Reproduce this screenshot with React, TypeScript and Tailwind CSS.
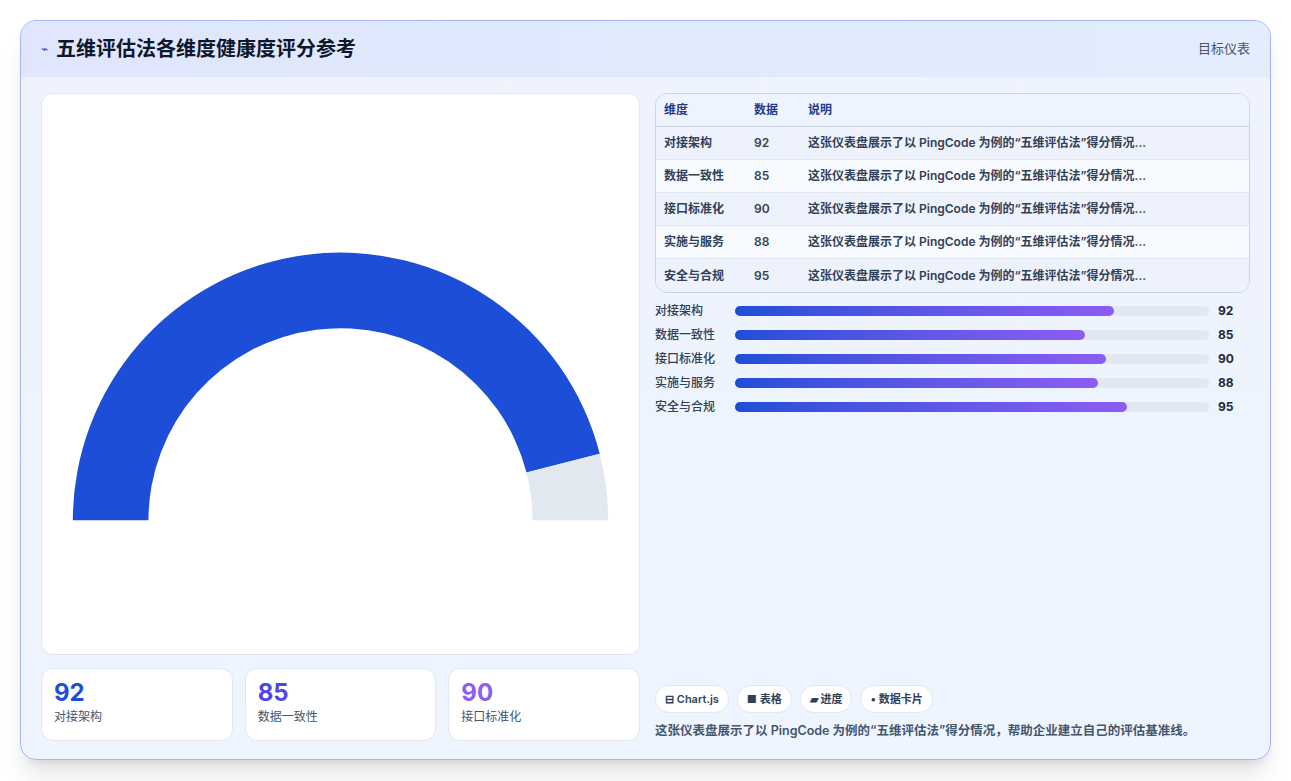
const rows = [
  { name: "对接架构", v: 92 },
  { name: "数据一致性", v: 85 },
  { name: "接口标准化", v: 90 },
  { name: "实施与服务", v: 88 },
  { name: "安全与合规", v: 95 },
];
const DESC = "这张仪表盘展示了以 PingCode 为例的“五维评估法”得分情况，帮助企业建立自己的评估基准线。";

function Gauge({ value }: { value: number }) {
  const cx = 300, cy = 300, R = 269, r = 193;
  const a = Math.PI * (1 - value / 100);
  const pt = (rad: number, ang: number) => [cx + rad * Math.cos(ang), cy - rad * Math.sin(ang)];
  const [ox, oy] = pt(R, a);
  const [ix, iy] = pt(r, a);
  const blue = `M ${cx - R} ${cy} A ${R} ${R} 0 0 1 ${ox} ${oy} L ${ix} ${iy} A ${r} ${r} 0 0 0 ${cx - r} ${cy} Z`;
  const gray = `M ${ox} ${oy} A ${R} ${R} 0 0 1 ${cx + R} ${cy} L ${cx + r} ${cy} A ${r} ${r} 0 0 0 ${ix} ${iy} Z`;
  return (
    <svg width="600" height="310" viewBox="0 0 600 310">
      <path d={blue} fill="#1d4ed8" />
      <path d={gray} fill="#e2e8f0" />
    </svg>
  );
}

export default function App() {
  return (
    <div className="w-[1291px] h-[781px] bg-white p-5" style={{ fontFamily: "Inter, 'Noto Sans CJK SC', sans-serif" }}>
      <div className="h-[740px] rounded-2xl border border-[#a5b4fc] bg-gradient-to-b from-[#eef3fe] to-[#eef5ff] shadow-xl overflow-hidden flex flex-col">
        <div className="h-[56px] shrink-0 flex items-center justify-between px-5 bg-gradient-to-r from-[#dfe6fd] to-[#e3edfd]">
          <div className="flex items-center gap-2">
            <span className="text-[#1d4ed8] text-xs">⌁</span>
            <h1 className="text-[20px] font-bold text-[#0f172a]">五维评估法各维度健康度评分参考</h1>
          </div>
          <span className="text-[13px] text-slate-600">目标仪表</span>
        </div>
        <div className="flex-1 flex gap-[15px] px-5 pt-4 pb-[18px]">
          <div className="w-[599px] flex flex-col gap-[13px]">
            <div className="flex-1 rounded-xl bg-white border border-[#e2e8f0] flex items-center justify-center pt-[4px]">
              <Gauge value={92} />
            </div>
            <div className="grid grid-cols-3 gap-3 h-[73px]">
              {[
                { v: 92, n: "对接架构", c: "text-[#1d4ed8]" },
                { v: 85, n: "数据一致性", c: "text-[#4f46e5]" },
                { v: 90, n: "接口标准化", c: "text-[#8b5cf6]" },
              ].map((s) => (
                <div key={s.n} className="rounded-xl bg-white border border-[#e2e8f0] px-3 pt-2">
                  <div className={`text-[24px] font-bold leading-8 ${s.c}`}>{s.v}</div>
                  <div className="text-xs text-slate-600">{s.n}</div>
                </div>
              ))}
            </div>
          </div>
          <div className="flex-1 flex flex-col">
            <div className="rounded-xl border border-[#cbd5e1] overflow-hidden text-xs font-semibold">
              <div className="flex h-[33px] items-center bg-[#eef4ff] text-[#1e3a8a] border-b border-[#cbd5e1]">
                <div className="w-[98px] pl-2">维度</div>
                <div className="w-[54px]">数据</div>
                <div>说明</div>
              </div>
              {rows.map((r, i) => (
                <div key={r.name} className={`flex h-[33px] items-center text-slate-700 ${i < 4 ? "border-b border-[#e2e8f0]" : ""} ${i % 2 === 0 ? "bg-[#eef2fd]" : "bg-[#f7fafe]"}`}>
                  <div className="w-[98px] pl-2">{r.name}</div>
                  <div className="w-[54px]">{r.v}</div>
                  <div>这张仪表盘展示了以 PingCode 为例的“五维评估法”得分情况...</div>
                </div>
              ))}
            </div>
            <div className="mt-[11px] flex flex-col gap-[10px]">
              {rows.map((r) => (
                <div key={r.name} className="flex items-center h-[14px] text-xs">
                  <div className="w-[80px] text-slate-700 font-medium">{r.name}</div>
                  <div className="w-[474px] h-[10px] rounded-full bg-[#e2e8f0]">
                    <div className="h-full rounded-full bg-gradient-to-r from-[#1d4ed8] to-[#8b5cf6]" style={{ width: `${(r.v / 115) * 100}%` }} />
                  </div>
                  <div className="ml-[9px] font-bold text-slate-800">{r.v}</div>
                </div>
              ))}
            </div>
            <div className="mt-auto flex gap-2 text-[11px] font-semibold text-slate-700">
              {["⊟ Chart.js", "■ 表格", "▰ 进度", "• 数据卡片"].map((t) => (
                <span key={t} className="rounded-full bg-white border border-[#e2e8f0] px-[9px] h-[28px] flex items-center">{t}</span>
              ))}
            </div>
            <p className="mt-[9px] text-[12.5px] font-semibold text-slate-600">{DESC}</p>
          </div>
        </div>
      </div>
    </div>
  );
}
